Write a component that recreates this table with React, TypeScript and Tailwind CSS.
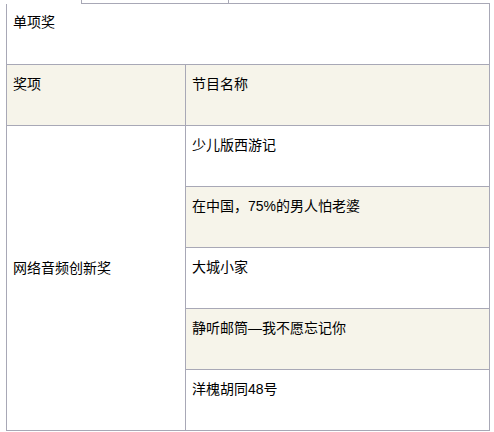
const programs = [
  { name: '少儿版西游记', shaded: false },
  { name: '在中国，75%的男人怕老婆', shaded: true },
  { name: '大城小家', shaded: false },
  { name: '静听邮筒—我不愿忘记你', shaded: true },
  { name: '洋槐胡同48号', shaded: false },
]

const cell = 'h-[61px] border-b border-[#a8a8b6] px-[6px] pt-[9px] leading-[20px]'

export default function App() {
  return (
    <div
      className="h-[432px] w-[494px] overflow-hidden bg-white text-[14px] text-black"
      style={{ fontFamily: '"Liberation Sans", "Noto Sans CJK SC", sans-serif' }}
    >
      {/* tail of the table above */}
      <div className="h-[4px]">
        <div className="ml-[81px] flex h-[4px] w-[409px] border-b border-l border-[#a8a8b6]">
          <div className="h-full w-[147px] border-r border-[#a8a8b6]" />
        </div>
      </div>

      <div className="ml-[6px] w-[484px] border-x border-[#a8a8b6]">
        <div className="h-[61px] border-b border-[#a8a8b6] px-[6px] pt-[8px] leading-[20px]">单项奖</div>

        <div className="flex bg-[#f6f4ea]">
          <div className={`${cell} w-[179px] border-r`}>奖项</div>
          <div className={`${cell} flex-1`}>节目名称</div>
        </div>

        <div className="flex">
          <div className="flex w-[179px] items-center border-b border-r border-[#a8a8b6] px-[6px] pb-[20px] leading-[20px]">
            网络音频创新奖
          </div>
          <div className="flex-1">
            {programs.map((p) => (
              <div key={p.name} className={`${cell} ${p.shaded ? 'bg-[#f6f4ea]' : ''}`}>
                {p.name}
              </div>
            ))}
          </div>
        </div>
      </div>
    </div>
  )
}
